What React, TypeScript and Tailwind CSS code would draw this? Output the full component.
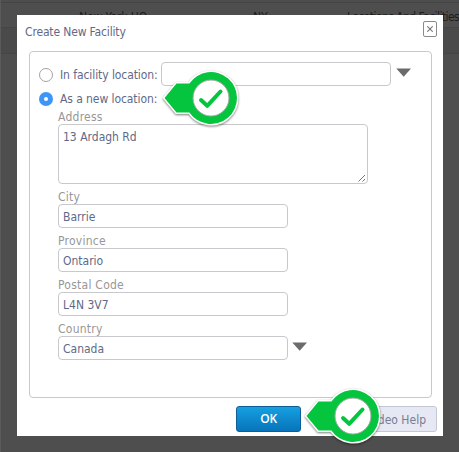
import React from 'react';

interface FieldProps {
  label: string;
  value: string;
  hasMenu?: boolean;
}

const DropArrow: React.FC = () => (
  <svg width="16" height="9" viewBox="0 0 16 9" className="mb-[3px] shrink-0">
    <path d="M0.3 0.5H15L7.7 8.7Z" fill="#6b6b6b" />
  </svg>
);

const CheckBadge: React.FC<{ className: string }> = ({ className }) => (
  <svg width="84" height="64" viewBox="0 0 84 64" className={`absolute ${className}`}>
    <g className="drop-shadow-[0_1px_1px_rgba(0,0,0,0.5)]">
      <path
        d="M5.5 31L17.5 16.5H30.4A26 26 0 1 1 30.4 45.5H17.5Z"
        fill="#05c53e"
        stroke="#fff"
        strokeWidth="3"
        paintOrder="stroke"
      />
    </g>
    <circle cx="52" cy="31" r="18" fill="#fff" stroke="#9aa89d" strokeWidth="1" />
    <circle cx="52" cy="31.5" r="16.7" fill="#fff" />
    <path
      d="M42 33L48.2 38.8L61.5 24.5"
      fill="none"
      stroke="#05c53e"
      strokeWidth="4"
      strokeLinecap="round"
      strokeLinejoin="round"
    />
  </svg>
);

const Radio: React.FC<{ checked?: boolean }> = ({ checked }) =>
  checked ? (
    <span className="mt-px flex size-3.5 shrink-0 items-center justify-center rounded-full bg-[#3d96f7]">
      <span className="size-1 rounded-full bg-white" />
    </span>
  ) : (
    <span className="mt-px size-3.5 shrink-0 rounded-full border border-[#a3a3a3] bg-white" />
  );

const Field: React.FC<FieldProps> = ({ label, value, hasMenu }) => (
  <div className="flex flex-col">
    <label className="h-5 pt-[5px] text-[12px] leading-[17px] tracking-[0.25px] text-[#979797]">{label}</label>
    <div className="flex items-center gap-1">
      <div className="h-6 w-[230px] rounded border border-[#c9c9cd] pl-1 text-[12px] leading-6">{value}</div>
      {hasMenu && <DropArrow />}
    </div>
  </div>
);

const FIELDS: FieldProps[] = [
  { label: 'City', value: 'Barrie' },
  { label: 'Province', value: 'Ontario' },
  { label: 'Postal Code', value: 'L4N 3V7' },
  { label: 'Country', value: 'Canada', hasMenu: true },
];

const App: React.FC = () => (
  <div className="relative h-[452px] w-[459px] overflow-hidden bg-[#4e4e4e] font-['DejaVu_Sans_Condensed','DejaVu_Sans',sans-serif] text-[12px] text-[#5f6987]">
    {/* dimmed table behind the dialog */}
    <div className="h-full border-l border-[#5a5a5a]">
      <div className="h-[3px] border-b border-[#444]" />
      <div className="flex h-[25px] border-b border-[#454545] pt-[5px] whitespace-nowrap text-[#1d1d1d]">
        <span className="w-[174px] shrink-0 pl-[78px] tracking-[-0.1px]">New York HQ</span>
        <span className="w-[94px] shrink-0 pl-[78px]">NY</span>
        <span className="shrink-0 pl-[78px] tracking-[-0.55px]">Locations And Facilities</span>
      </div>
      <div className="h-[26px] border-b border-[#454545] bg-[#4a4a4a]" />
    </div>

    <div className="absolute top-[15px] left-[17px] flex h-[421px] w-[426px] flex-col bg-white">
      <header className="flex h-9 items-start justify-between pt-1.5 pr-1.5 pl-2">
        <h1 className="pt-[3px] leading-4 tracking-[-0.15px]">Create New Facility</h1>
        <button className="flex h-4 w-3.5 items-center justify-center rounded-[2px] border border-[#8a8a8a]">
          <svg width="6" height="6" viewBox="0 0 6 6" stroke="#777" strokeWidth="1.1">
            <path d="M0.3 0.3L5.7 5.7M5.7 0.3L0.3 5.7" />
          </svg>
        </button>
      </header>

      <main className="ml-3 h-[347px] w-[403px] rounded border border-[#c9c9cd] pt-2.5 pl-[9px]">
        <div className="flex h-6 items-center">
          <Radio />
          <span className="w-[108px] pt-0.5 pl-[7px] tracking-[-0.08px] whitespace-nowrap">In facility location:</span>
          <div className="h-6 w-[230px] rounded border border-[#c9c9cd]" />
          <div className="pl-[5px]"><DropArrow /></div>
        </div>
        <div className="flex h-6 items-center">
          <Radio checked />
          <span className="pt-0.5 pl-[7px] tracking-[-0.08px] whitespace-nowrap">As a new location:</span>
        </div>
        <div className="pl-[19px]">
          <label className="block h-3.5 text-[12px] leading-[15px] tracking-[0.25px] text-[#979797]">Address</label>
          <div className="flex h-[60px] w-[310px] items-end rounded border border-[#c9c9cd] pl-1">
            <span className="flex-1 self-start pt-1 leading-4">13 Ardagh Rd</span>
            <svg width="9" height="9" viewBox="0 0 9 9" stroke="#666" strokeWidth="0.9">
              <path d="M0.5 7.5L7 1M4.5 7.5L7 5" />
            </svg>
          </div>
          {FIELDS.map((f) => (
            <Field key={f.label} {...f} />
          ))}
        </div>
      </main>

      <footer className="flex justify-between pt-2 pr-1.5 pl-[219px]">
        <button className="h-[26px] w-[65px] rounded-[3px] border border-[#0d5d96] bg-linear-to-b from-[#16a0e0] to-[#0874ba] font-['Open_Sans',sans-serif] text-[12px] font-semibold tracking-[-0.3px] text-white">
          OK
        </button>
        <button className="h-[26px] w-[76px] rounded-[3px] border border-[#c4c8d6] bg-[#e6e9f3] pt-px pr-1 text-right whitespace-nowrap text-[#777d92]">
          <span className="pr-[6px]">Video Help</span>
        </button>
      </footer>
    </div>

    <CheckBadge className="top-[67px] left-[159px]" />
    <CheckBadge className="top-[385px] left-[301px]" />
  </div>
);

export default App;
